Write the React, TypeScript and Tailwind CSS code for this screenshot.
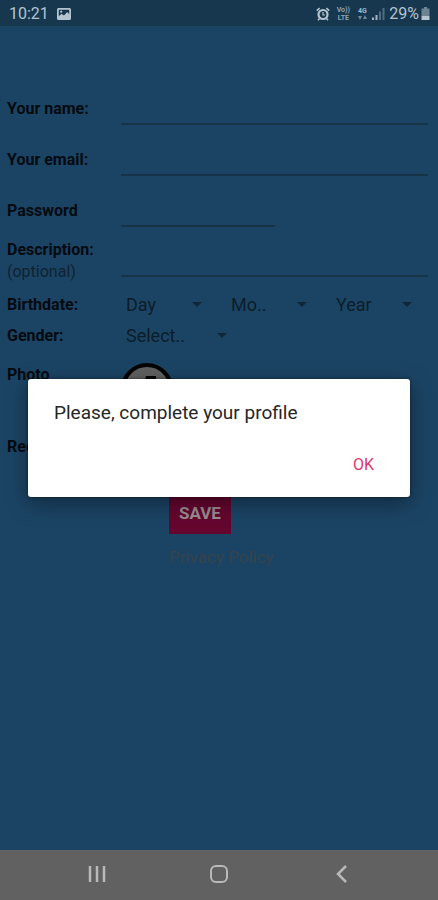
import React from 'react';

interface TextFieldProps {
  id: string;
  label: string;
  type?: string;
  short?: boolean;
}

const TextField: React.FC<TextFieldProps> = ({ id, label, type = 'text', short }) => (
  <div className="flex h-[51px] items-center">
    <label htmlFor={id} className="w-[114px] shrink-0 font-bold">{label}</label>
    <div className="flex-1">
      <input
        id={id}
        type={type}
        className={`block h-[33px] border-b-2 border-[#163447] bg-transparent px-1 text-lg outline-none ${short ? 'w-1/2' : 'w-full'}`}
      />
    </div>
  </div>
);

interface SpinnerProps {
  id: string;
  label: string;
  value: string;
}

const Spinner: React.FC<SpinnerProps> = ({ id, label, value }) => (
  <div className="relative w-[105px] shrink-0">
    <select
      id={id}
      aria-label={label}
      className="block w-full appearance-none bg-transparent pl-[5px] text-lg leading-6 text-[#0c1d2a] outline-none"
    >
      <option>{value}</option>
    </select>
    <svg viewBox="0 0 10 5" className="pointer-events-none absolute right-6 top-[9px] h-[5px] w-[10px] fill-[#0d2638]">
      <path d="M0 0h10L5 5z" />
    </svg>
  </div>
);

const StatusBar = () => (
  <header className="flex h-[26px] items-center bg-[#17374f] pl-[9px] pr-2 pt-px text-base text-[#b4c4d0]">
    <time>10:21</time>
    <svg viewBox="0 0 14 12" className="ml-2 h-3 w-[14px]">
      <path
        fill="#b4c4d0"
        fillRule="evenodd"
        d="M1.5 0h11A1.5 1.5 0 0 1 14 1.5v9a1.5 1.5 0 0 1-1.500 1.500h-11A1.500 1.500 0 0 1 0 10.500v-9A1.500 1.500 0 0 1 1.500 0zM1.800 1.800v6.400l2.700-2.400 2.500 1.700 3.200-3.500 2 2.200V1.800zM4.200 2.600a1.100 1.100 0 1 1 0 2.200 1.100 1.100 0 0 1 0-2.200z"
      />
    </svg>
    <div className="ml-auto flex items-center">
      <svg viewBox="0 0 14 14" className="h-[14px] w-[14px]" fill="none" stroke="#b4c4d0">
        <circle cx="7" cy="7.500" r="4.500" strokeWidth="2.200" />
        <path d="M7 5v3h2" strokeWidth="1.200" />
        <path d="M.8 3.600 3.600 1.200M13.200 3.600l-2.800-2.400M3.500 11.500 2 13.200M10.500 11.500l1.500 1.700" strokeWidth="1.600" />
      </svg>
      <span className="ml-[6px] flex w-[14px] flex-col items-center text-[7px] font-bold leading-[8px] text-[#8ea4b4]">
        <span>Vo))</span>
        <span>LTE</span>
      </span>
      <span className="ml-[6px] flex w-3 flex-col items-center text-[7px] font-bold leading-[7px] text-[#a3b5c2]">
        4G
        <svg viewBox="0 0 9 5" className="h-[5px] w-[9px] fill-[#6f8798]">
          <path d="M0 1h4L2 5zM5 4h4L7 0z" />
        </svg>
      </span>
      <svg viewBox="0 0 13 12" className="ml-1 h-3 w-[13px]">
        <path fill="#a3b5c2" d="M0 9.500h2V12H0zM3.500 7h2v5h-2z" />
        <path fill="#4f6b7f" d="M7 3.500h2V12H7zM10.500 0h2v12h-2z" />
      </svg>
      <span className="ml-1">29%</span>
      <svg viewBox="0 0 9 13" className="ml-[2px] h-[13px] w-[9px]">
        <path fill="#6d8495" d="M3 0h3v1.500h2.500V9h-8V1.500H3z" />
        <path fill="#b4c4d0" d="M.5 9h8v4h-8z" />
      </svg>
    </div>
  </header>
);

const ProfileForm = () => (
  <form className="pl-[7px] pr-[10px] pt-[57px] text-base leading-[22px] text-[#040a10]">
    <TextField id="name" label="Your name:" />
    <TextField id="email" label="Your email:" type="email" />
    <TextField id="password" label="Password" type="password" short />
    <div className="flex h-[53px] pt-[3px]">
      <label htmlFor="description" className="w-[114px] shrink-0 font-bold">
        Description:
        <br />
        <span className="font-normal text-[#0f2332]">(optional)</span>
      </label>
      <div className="flex-1">
        <textarea id="description" className="block h-[38px] w-full resize-none border-b-2 border-[#163447] bg-transparent px-1 text-lg outline-none" />
      </div>
    </div>
    <div className="flex h-[31px] items-center">
      <span className="w-[114px] shrink-0 font-bold">Birthdate:</span>
      <Spinner id="day" label="Day" value="Day" />
      <Spinner id="month" label="Month" value="Mo.." />
      <Spinner id="year" label="Year" value="Year" />
    </div>
    <div className="flex h-[31px] items-center">
      <label htmlFor="gender" className="w-[114px] shrink-0 font-bold">Gender:</label>
      <div className="flex w-[130px] *:w-full">
        <Spinner id="gender" label="Gender" value="Select.." />
      </div>
    </div>
    <div className="mt-3 flex h-[73px]">
      <span className="w-[114px] shrink-0 pt-px font-bold">Photo</span>
      <svg viewBox="0 0 52 52" className="h-[52px] w-[52px]">
        <circle cx="26" cy="26" r="24" fill="#616161" stroke="#040404" strokeWidth="4" />
        <path d="M25 13h10v12H22z" fill="#040404" />
      </svg>
    </div>
    <div className="flex h-[56px]">
      <span className="font-bold">Rec</span>
    </div>
    <div className="flex flex-col items-start pl-[162px]">
      <button type="button" className="h-[42px] bg-[#65062f] px-[10px] text-[17px] font-bold text-[#9a8d93]">SAVE</button>
      <a href="#privacy" className="mt-3 text-[17px] text-[#35434d]">Privacy Policy</a>
    </div>
  </form>
);

const Dialog = () => (
  <div className="absolute inset-0 flex items-center px-7">
    <div role="dialog" aria-label="Profile" className="w-full rounded-[3px] bg-white px-[26px] pb-5 pt-[22px] shadow-[0_6px_22px_rgba(0,0,0,0.4),0_0_3px_rgba(0,0,0,0.5)]">
      <p className="text-[19px] leading-6 text-[#262626]">Please, complete your profile</p>
      <div className="mt-7 flex justify-end pr-[10px]">
        <button type="button" className="text-base text-[#e0346f]">OK</button>
      </div>
    </div>
  </div>
);

const NavBar = () => (
  <nav className="flex h-[50px] items-center bg-[#616161]">
    <div className="mx-auto flex w-[62%] items-center justify-between pb-[2px]">
      <button type="button" aria-label="Recent apps" className="w-7">
        <svg viewBox="0 0 18 18" className="mx-auto h-[18px] w-[18px]" stroke="#b9b9b9" strokeWidth="2.500">
          <path d="M2 1v16M9 1v16M16 1v16" />
        </svg>
      </button>
      <button type="button" aria-label="Home" className="w-7">
        <svg viewBox="0 0 18 18" className="mx-auto h-[18px] w-[18px]" fill="none" stroke="#b9b9b9" strokeWidth="2">
          <rect x="1" y="1" width="16" height="16" rx="5" />
        </svg>
      </button>
      <button type="button" aria-label="Back" className="w-7">
        <svg viewBox="0 0 18 18" className="mx-auto h-[18px] w-[18px]" fill="none" stroke="#b9b9b9" strokeWidth="2.500">
          <path d="M14 1 6 9l8 8" />
        </svg>
      </button>
    </div>
  </nav>
);

const App: React.FC = () => (
  <div className="flex min-h-screen flex-col bg-[#1b4464] font-[Roboto,sans-serif]">
    <StatusBar />
    <main className="relative flex-1">
      <ProfileForm />
      <Dialog />
    </main>
    <NavBar />
  </div>
);

export default App;
